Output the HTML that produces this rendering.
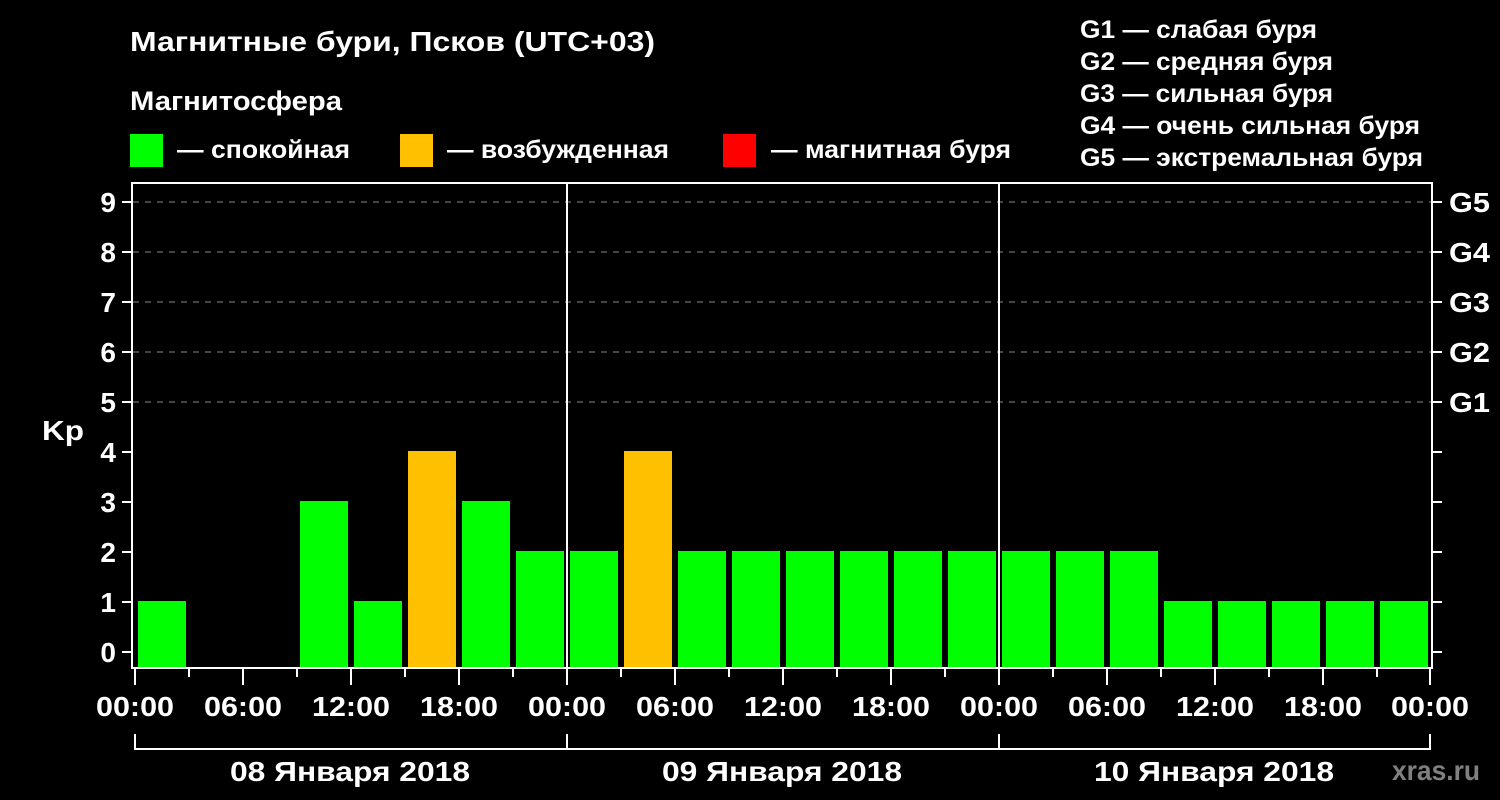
<!DOCTYPE html>
<html><head><meta charset="utf-8"><style>
html,body{margin:0;padding:0;background:#000;width:1500px;height:800px;overflow:hidden}
svg{display:block}
text{font-family:"Liberation Sans",sans-serif;font-weight:bold;fill:#fff}
</style></head><body>
<svg width="1500" height="800" xmlns="http://www.w3.org/2000/svg">
<rect width="1500" height="800" fill="#000"/>
<text x="130" y="51" font-size="28" textLength="525" lengthAdjust="spacingAndGlyphs">Магнитные бури, Псков (UTC+03)</text>
<text x="130" y="110" font-size="27" textLength="212" lengthAdjust="spacingAndGlyphs">Магнитосфера</text>
<rect x="130" y="134" width="33" height="33" fill="#00ff00"/>
<text x="177" y="158" font-size="25" textLength="173" lengthAdjust="spacingAndGlyphs">— спокойная</text>
<rect x="400" y="134" width="33" height="33" fill="#ffc000"/>
<text x="447" y="158" font-size="25" textLength="222" lengthAdjust="spacingAndGlyphs">— возбужденная</text>
<rect x="723" y="134" width="33" height="33" fill="#ff0000"/>
<text x="771" y="158" font-size="25" textLength="240" lengthAdjust="spacingAndGlyphs">— магнитная буря</text>
<g font-size="25">
<text x="1080" y="38" textLength="237" lengthAdjust="spacingAndGlyphs">G1 — слабая буря</text>
<text x="1080" y="70" textLength="253" lengthAdjust="spacingAndGlyphs">G2 — средняя буря</text>
<text x="1080" y="102" textLength="253" lengthAdjust="spacingAndGlyphs">G3 — сильная буря</text>
<text x="1080" y="134" textLength="340" lengthAdjust="spacingAndGlyphs">G4 — очень сильная буря</text>
<text x="1080" y="166" textLength="343" lengthAdjust="spacingAndGlyphs">G5 — экстремальная буря</text>
</g>
<g stroke="#888" stroke-width="1" stroke-dasharray="6,6">
<line x1="133" y1="202" x2="1432" y2="202"/>
<line x1="133" y1="252" x2="1432" y2="252"/>
<line x1="133" y1="302" x2="1432" y2="302"/>
<line x1="133" y1="352" x2="1432" y2="352"/>
<line x1="133" y1="402" x2="1432" y2="402"/>
</g>
<g fill="#00ff00">
<rect x="138" y="601" width="48" height="67"/>
<rect x="300" y="501" width="48" height="167"/>
<rect x="354" y="601" width="48" height="67"/>
<rect x="462" y="501" width="48" height="167"/>
<rect x="516" y="551" width="48" height="117"/>
<rect x="570" y="551" width="48" height="117"/>
<rect x="678" y="551" width="48" height="117"/>
<rect x="732" y="551" width="48" height="117"/>
<rect x="786" y="551" width="48" height="117"/>
<rect x="840" y="551" width="48" height="117"/>
<rect x="894" y="551" width="48" height="117"/>
<rect x="948" y="551" width="48" height="117"/>
<rect x="1002" y="551" width="48" height="117"/>
<rect x="1056" y="551" width="48" height="117"/>
<rect x="1110" y="551" width="48" height="117"/>
<rect x="1164" y="601" width="48" height="67"/>
<rect x="1218" y="601" width="48" height="67"/>
<rect x="1272" y="601" width="48" height="67"/>
<rect x="1326" y="601" width="48" height="67"/>
<rect x="1380" y="601" width="48" height="67"/>
</g>
<g fill="#ffc000">
<rect x="408" y="451" width="48" height="217"/>
<rect x="624" y="451" width="48" height="217"/>
</g>
<g stroke="#fff" stroke-width="2" fill="none">
<rect x="132" y="183" width="1300" height="485"/>
<line x1="567" y1="183" x2="567" y2="668"/>
<line x1="999" y1="183" x2="999" y2="668"/>
<path d="M122 202H132M122 252H132M122 302H132M122 352H132M122 402H132M122 452H132M122 502H132M122 552H132M122 602H132M122 652H132"/>
<path d="M1432 202H1442M1432 252H1442M1432 302H1442M1432 352H1442M1432 402H1442M1432 452H1442M1432 502H1442M1432 552H1442M1432 602H1442M1432 652H1442"/>
<path d="M135 668V685M243 668V685M351 668V685M459 668V685M567 668V685M675 668V685M783 668V685M891 668V685M999 668V685M1107 668V685M1215 668V685M1323 668V685M1430 668V685"/>
<path d="M189 668V677M297 668V677M405 668V677M513 668V677M621 668V677M729 668V677M837 668V677M945 668V677M1053 668V677M1161 668V677M1269 668V677M1377 668V677"/>
<path d="M135 734V749H1430V734M567 734V749M999 734V749"/>
</g>
<g font-size="28" text-anchor="end">
<text x="116" y="212">9</text><text x="116" y="262">8</text><text x="116" y="312">7</text>
<text x="116" y="362">6</text><text x="116" y="412">5</text><text x="116" y="462">4</text>
<text x="116" y="512">3</text><text x="116" y="562">2</text><text x="116" y="612">1</text>
<text x="116" y="662">0</text>
</g>
<text x="42" y="440" font-size="28" textLength="42" lengthAdjust="spacingAndGlyphs">Kp</text>
<g font-size="28">
<text x="1449" y="212" textLength="41" lengthAdjust="spacingAndGlyphs">G5</text>
<text x="1449" y="262" textLength="41" lengthAdjust="spacingAndGlyphs">G4</text>
<text x="1449" y="312" textLength="41" lengthAdjust="spacingAndGlyphs">G3</text>
<text x="1449" y="362" textLength="41" lengthAdjust="spacingAndGlyphs">G2</text>
<text x="1449" y="412" textLength="41" lengthAdjust="spacingAndGlyphs">G1</text>
</g>
<g font-size="28">
<text x="96" y="716" textLength="78" lengthAdjust="spacingAndGlyphs">00:00</text>
<text x="204" y="716" textLength="78" lengthAdjust="spacingAndGlyphs">06:00</text>
<text x="312" y="716" textLength="78" lengthAdjust="spacingAndGlyphs">12:00</text>
<text x="420" y="716" textLength="78" lengthAdjust="spacingAndGlyphs">18:00</text>
<text x="528" y="716" textLength="78" lengthAdjust="spacingAndGlyphs">00:00</text>
<text x="636" y="716" textLength="78" lengthAdjust="spacingAndGlyphs">06:00</text>
<text x="744" y="716" textLength="78" lengthAdjust="spacingAndGlyphs">12:00</text>
<text x="852" y="716" textLength="78" lengthAdjust="spacingAndGlyphs">18:00</text>
<text x="960" y="716" textLength="78" lengthAdjust="spacingAndGlyphs">00:00</text>
<text x="1068" y="716" textLength="78" lengthAdjust="spacingAndGlyphs">06:00</text>
<text x="1176" y="716" textLength="78" lengthAdjust="spacingAndGlyphs">12:00</text>
<text x="1284" y="716" textLength="78" lengthAdjust="spacingAndGlyphs">18:00</text>
<text x="1391" y="716" textLength="78" lengthAdjust="spacingAndGlyphs">00:00</text>
<text x="230" y="781" textLength="240" lengthAdjust="spacingAndGlyphs">08 Января 2018</text>
<text x="662" y="781" textLength="240" lengthAdjust="spacingAndGlyphs">09 Января 2018</text>
<text x="1094" y="781" textLength="240" lengthAdjust="spacingAndGlyphs">10 Января 2018</text>
</g>
<text x="1392" y="780" font-size="28" textLength="88" lengthAdjust="spacingAndGlyphs" style="fill:#808080">xras.ru</text>
</svg>
</body></html>
